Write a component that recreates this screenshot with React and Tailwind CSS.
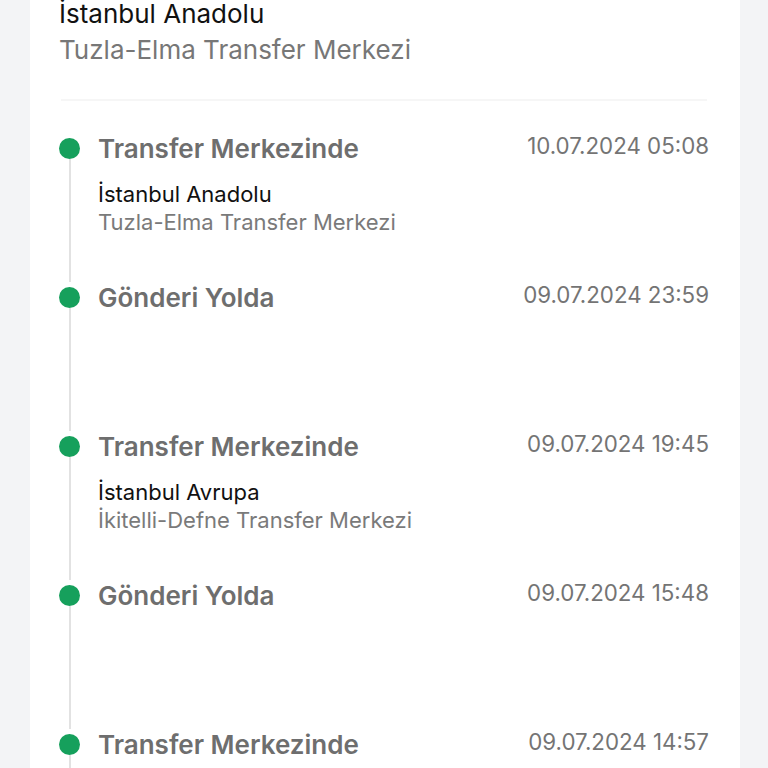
import React from 'react';

const events = [
  { title: 'Transfer Merkezinde', date: '10.07.2024 05:08', city: 'İstanbul Anadolu', place: 'Tuzla-Elma Transfer Merkezi' },
  { title: 'Gönderi Yolda', date: '09.07.2024 23:59' },
  { title: 'Transfer Merkezinde', date: '09.07.2024 19:45', city: 'İstanbul Avrupa', place: 'İkitelli-Defne Transfer Merkezi' },
  { title: 'Gönderi Yolda', date: '09.07.2024 15:48' },
  { title: 'Transfer Merkezinde', date: '09.07.2024 14:57' },
];

const TimelineItem = ({ item }) => (
  <div className="flex h-[149px]">
    {/* dot + rail */}
    <div className="flex flex-col items-center w-[21px] shrink-0">
      <div className="h-[5px]" />
      <div className="w-[21px] h-[21px] rounded-full bg-[#16a05c] shrink-0" />
      <div className="w-[2px] flex-1 bg-[#e2e2e2]" />
    </div>

    <div className="flex-1 ml-[18px]">
      <div className="flex justify-between items-start">
        <h3 className="text-[26px] leading-[32px] font-semibold text-[#6e6e6e]">{item.title}</h3>
        <span className="text-[22.3px] leading-[26px] text-[#747474]">{item.date}</span>
      </div>
      {item.city && (
        <div className="mt-[15px]">
          <p className="text-[22px] leading-[28px] text-[#111]">{item.city}</p>
          <p className="text-[22px] leading-[28px] text-[#7a7a7a]">{item.place}</p>
        </div>
      )}
    </div>
  </div>
);

export default function App() {
  return (
    <div className="h-[768px] bg-[#f3f4f6] pl-[30px] pr-[28px] overflow-hidden" style={{ fontFamily: 'Inter, "Noto Sans", sans-serif' }}>
      <div className="bg-white pl-[29px] pr-[31px] h-[768px] flex flex-col">
        <div className="-mt-[2px]">
          <p className="text-[26px] leading-[32px] text-[#111]">İstanbul Anadolu</p>
          <p className="text-[26px] leading-[32px] text-[#777] mt-[4px]">Tuzla-Elma Transfer Merkezi</p>
        </div>
        <div className="h-[2px] bg-[#f6f6f6] mt-[33px] mx-[2px] shrink-0" />

        <div className="mt-[32px]">
          {events.map((item, i) => (
            <TimelineItem key={i} item={item} />
          ))}
        </div>
      </div>
    </div>
  );
}
